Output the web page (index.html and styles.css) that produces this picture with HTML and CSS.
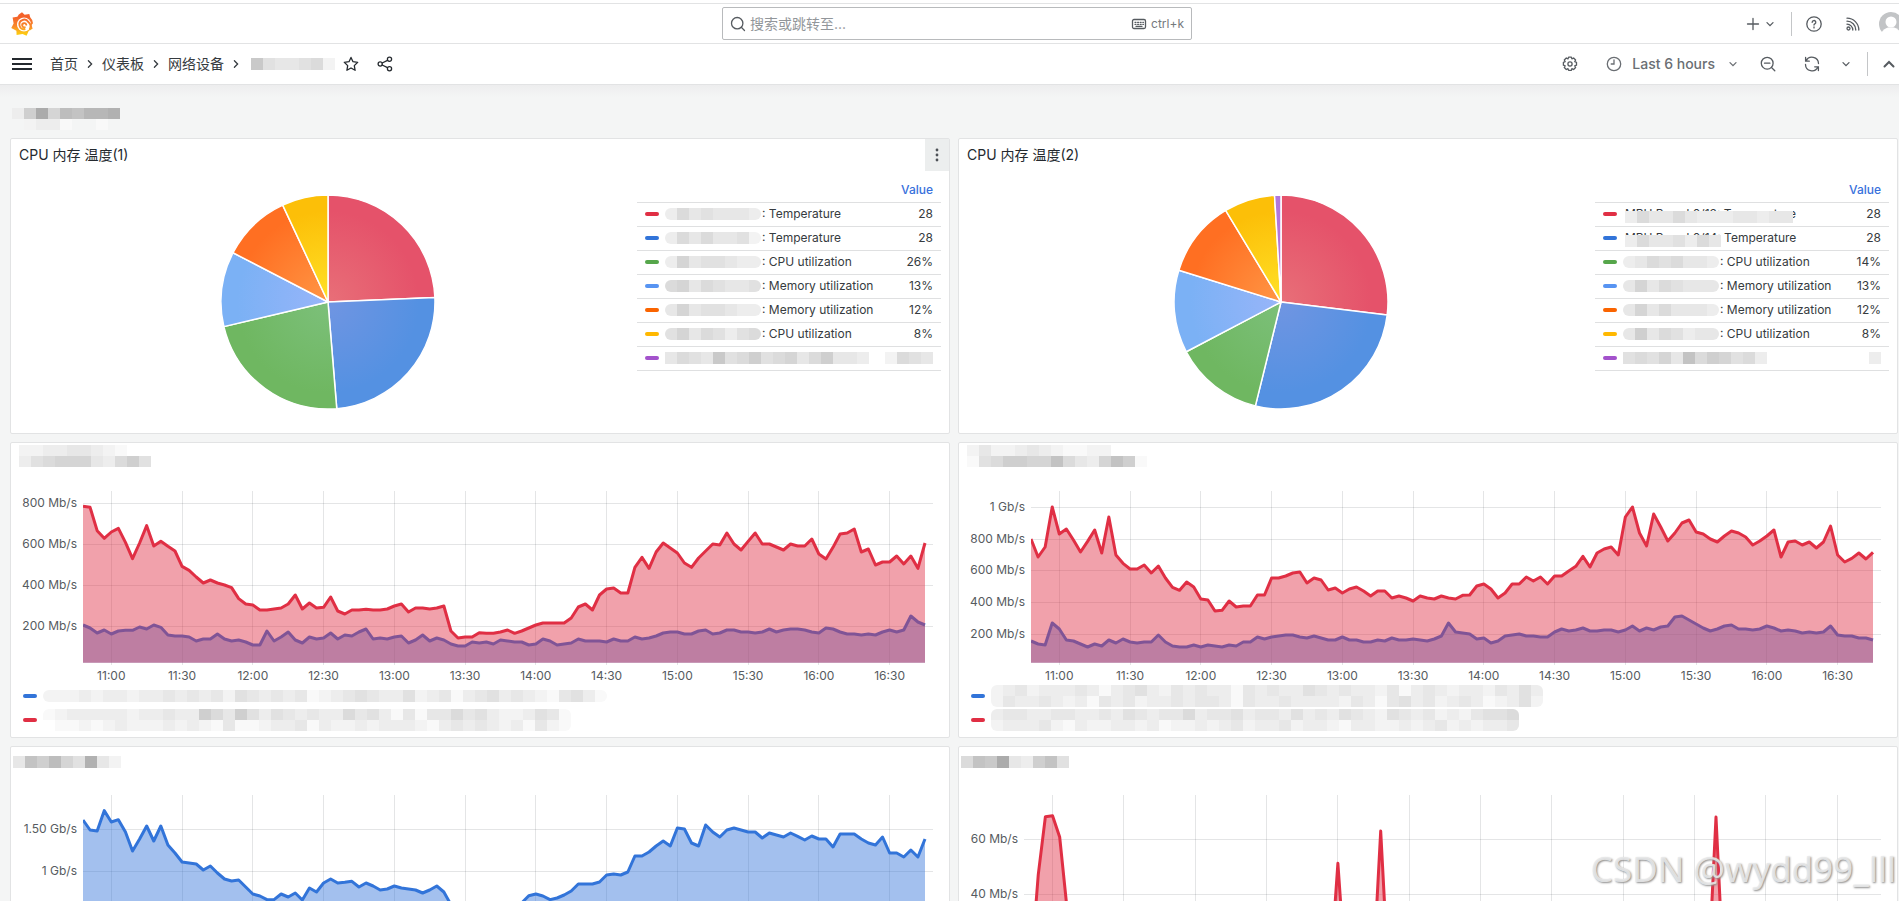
FILE: index.html
```html
<!DOCTYPE html>
<html lang="zh-CN">
<head>
<meta charset="utf-8">
<title>仪表板 - Grafana</title>
<link rel="stylesheet" href="styles.css">
</head>
<body>
<svg class="defs" aria-hidden="true">
  <defs>
    <symbol id="i-down" viewBox="0 0 16 16"><path d="M5 6.600l3 3 3-3"/></symbol>
    <symbol id="i-right" viewBox="0 0 16 16"><path d="M6.400 4.800L9.600 8l-3.200 3.200"/></symbol>
  </defs>
</svg>
<div class="shell">
  <header class="topbar">
    <a class="logo" href="#" aria-label="Grafana">
      <svg width="24" height="24" viewBox="0 0 24 24">
        <defs><linearGradient id="logo" gradientUnits="userSpaceOnUse" x1="0" y1="0" x2="0" y2="24"><stop offset="0.2" stop-color="#f4622a"/><stop offset="0.6" stop-color="#f98a2b"/><stop offset="0.85" stop-color="#fcc016"/><stop offset="1" stop-color="#fcd10b"/></linearGradient></defs>
        <path fill="url(#logo)" d="M11 .3L13.600 2.700 18.300 1.900 19.200 5.200Q22 8 22 11.200L20.600 13 21.600 16.800 17.800 18.700 15.600 23.800 11.600 22 5.600 23 5.400 18.700.3 16 2.600 11.500 1.600 5.400 6.400 4.800 7.800 2.400Z"/>
        <circle cx="13" cy="12.500" r="7" fill="#fff"/>
        <path fill="none" stroke="url(#logo)" stroke-width="1.900" stroke-linecap="round" d="M18.800 17.200A5.800 5.800 0 0 0 17.300 10 4.800 4.800 0 1 0 13.600 17.300M15.300 12.700a2.100 2.100 0 1 0-1.500 2.600"/>
      </svg>
    </a>
    <label class="search">
      <svg class="icon" width="16" height="16" viewBox="0 0 16 16"><circle cx="7.200" cy="7.200" r="5.700"/><path d="M11.300 11.300l3.200 3.200"/></svg>
      <input type="text" placeholder="搜索或跳转至..." aria-label="搜索或跳转至">
      <svg class="icon" width="16" height="16" viewBox="0 0 16 16"><rect x="1.500" y="3.500" width="13" height="9" rx="1.500"/><path stroke-dasharray="1 1.600" d="M4 6.300h8.500M4 8.300h8.500"/><path d="M5 10.300h6"/></svg>
      <span class="hint">ctrl+k</span>
    </label>
    <div class="top-actions">
      <button class="add" aria-label="New">
        <svg class="icon" width="16" height="16" viewBox="0 0 16 16"><path d="M8 2.500v11M2.500 8h11"/></svg>
        <svg class="icon" width="16" height="16"><use href="#i-down"/></svg>
      </button>
      <span class="divider"></span>
      <button aria-label="Help"><svg class="icon" width="18" height="18" viewBox="0 0 18 18"><circle cx="9" cy="9" r="7.200"/><path d="M7.200 7.400a1.800 1.800 0 1 1 2.600 1.500c-.5.300-.8.600-.8 1.200M9 11.900v1"/></svg></button>
      <button aria-label="News"><svg class="icon" width="16" height="16" viewBox="0 0 16 16"><circle cx="3.500" cy="12.500" r="1.500"/><path d="M2 8.200a5.800 5.800 0 0 1 5.800 5.800M2 5.200a8.800 8.800 0 0 1 8.800 8.800M2 2.200A11.800 11.800 0 0 1 13.800 14"/></svg></button>
      <button class="avatar" aria-label="Profile"><svg width="24" height="24" viewBox="0 0 24 24"><circle cx="12" cy="12" r="12" fill="#c2c4c6"/><circle cx="12" cy="10" r="5.500" fill="#fff"/><path fill="#fff" d="M2.500 20.500Q5 16.500 9 15.500h6q4 1 6.500 5A12 12 0 0 1 2.500 20.500z"/></svg></button>
    </div>
  </header>

  <nav class="toolbar">
    <button class="menu" aria-label="Menu"><svg width="20" height="14" viewBox="0 0 20 14"><path stroke="#24292e" stroke-width="2" d="M0 2h20M0 7h20M0 12h20"/></svg></button>
    <ol class="crumbs">
      <li><a href="#">首页</a></li>
      <li><svg class="icon" width="16" height="16"><use href="#i-right"/></svg></li>
      <li><a href="#">仪表板</a></li>
      <li><svg class="icon" width="16" height="16"><use href="#i-right"/></svg></li>
      <li><a href="#">网络设备</a></li>
      <li><svg class="icon" width="16" height="16"><use href="#i-right"/></svg></li>
      <li class="current"><span class="mosaic" data-rows="jfeefgc"></span></li>
    </ol>
    <button class="dark" aria-label="Star"><svg class="icon" width="16" height="16" viewBox="0 0 16 16"><path stroke-linejoin="round" d="M8 1.400l2 4.300 4.700.6-3.400 3.300.8 4.700L8 12l-4.100 2.300.8-4.700L1.300 6.300 6 5.700z"/></svg></button>
    <button class="dark share" aria-label="Share"><svg class="icon" width="16" height="16" viewBox="0 0 16 16"><circle cx="3.200" cy="8" r="2.100"/><circle cx="12.500" cy="3.300" r="2.100"/><circle cx="12.500" cy="12.700" r="2.100"/><path d="M5.200 7l5.300-2.700M5.200 9l5.300 2.700"/></svg></button>
    <div class="tools">
      <button aria-label="Settings"><svg class="icon" width="16" height="16" viewBox="0 0 16 16"><circle cx="8" cy="8" r="2.100"/><path stroke-linejoin="round" d="M6.600 1.200h2.800l.5 1.700 1.700-.9 2 2-.9 1.700 1.800.6v2.900l-1.800.6.9 1.700-2 2-1.700-.9-.5 1.800H6.600l-.6-1.800-1.700.9-2-2 .9-1.700-1.800-.6V6.300l1.800-.6-.9-1.700 2-2 1.700.9z"/></svg></button>
      <button class="range"><svg class="icon" width="16" height="16" viewBox="0 0 16 16"><circle cx="8" cy="8" r="6.700"/><path d="M8 4v4H5.200"/></svg><span>Last 6 hours</span><svg class="icon" width="16" height="16"><use href="#i-down"/></svg></button>
      <button class="zoom" aria-label="Zoom out"><svg class="icon" width="16" height="16" viewBox="0 0 16 16"><circle cx="7.200" cy="7.200" r="5.900"/><path d="M11.500 11.500l3.300 3.300M4.500 7.200h5.400"/></svg></button>
      <button class="refresh" aria-label="Refresh"><svg class="icon" width="16" height="16" viewBox="0 0 16 16"><path d="M1.600 1.500v3.700h3.700M2.100 5A6.500 6.500 0 0 1 14.500 7.600M14.400 14.500v-3.700h-3.700M13.900 11A6.500 6.500 0 0 1 1.500 8.400"/></svg></button>
      <button class="interval" aria-label="Refresh interval"><svg class="icon" width="16" height="16"><use href="#i-down"/></svg></button>
      <span class="divider"></span>
      <button class="collapse" aria-label="Collapse"><svg class="icon bold" width="16" height="16" viewBox="0 0 16 16"><path d="M3.500 10.500L8 6l4.500 4.500"/></svg></button>
    </div>
  </nav>

  <main class="dashboard">
    <h1 class="row-title"><span class="mosaic" data-rows="diohlkmmn/acddbaab"></span></h1>
    <div class="grid">
      <section class="panel">
        <header class="panel-head"><h2>CPU 内存 温度(1)</h2><button class="panel-menu" aria-label="Panel menu"><svg width="4" height="14" viewBox="0 0 4 14"><circle cx="2" cy="2" r="1.400"/><circle cx="2" cy="7" r="1.400"/><circle cx="2" cy="12" r="1.400"/></svg></button></header>
        <div class="pie-body">
          <svg class="pie" viewBox="-107 -107 214 214" data-values="28,28,26,13,12,8"></svg>
          <table class="legend-table first">
            <thead><tr><th></th><th>Value</th></tr></thead>
            <tbody>
              <tr><td><i class="key red"></i><span class="mosaic round" data-rows="dgefeeed"></span><span>: Temperature</span></td><td>28</td></tr>
              <tr><td><i class="key blue"></i><span class="mosaic round" data-rows="dgegeefc"></span><span>: Temperature</span></td><td>28</td></tr>
              <tr><td><i class="key green"></i><span class="mosaic round" data-rows="dheffedd"></span><span>: CPU utilization</span></td><td>26%</td></tr>
              <tr><td><i class="key sky"></i><span class="mosaic round" data-rows="ghegfeef"></span><span>: Memory utilization</span></td><td>13%</td></tr>
              <tr><td><i class="key orange"></i><span class="mosaic round" data-rows="eheffedd"></span><span>: Memory utilization</span></td><td>12%</td></tr>
              <tr><td><i class="key yellow"></i><span class="mosaic round" data-rows="fhegfdfg"></span><span>: CPU utilization</span></td><td>8%</td></tr>
              <tr><td><i class="key purple"></i><span class="mosaic" data-rows="egfejfgifghegieed"></span></td><td><span class="mosaic" data-rows="cgfe"></span></td></tr>
            </tbody>
          </table>
        </div>
      </section>

      <section class="panel">
        <header class="panel-head"><h2>CPU 内存 温度(2)</h2></header>
        <div class="pie-body">
          <svg class="pie" viewBox="-107 -107 214 214" data-values="28,28,14,13,12,8,1"></svg>
          <table class="legend-table second">
            <thead><tr><th></th><th>Value</th></tr></thead>
            <tbody>
              <tr><td><i class="key red"></i><span class="covered">MPU Board 0/13: Temperature<span class="mosaic" data-rows="dgeegedddeedee"></span></span></td><td>28</td></tr>
              <tr><td><i class="key blue"></i><span class="covered">MPU Board 0/14: Temperature<span class="mosaic" data-rows="dgeefdge"></span></span></td><td>28</td></tr>
              <tr><td><i class="key green"></i><span class="mosaic round" data-rows="degfgeed"></span><span>: CPU utilization</span></td><td>14%</td></tr>
              <tr><td><i class="key sky"></i><span class="mosaic round" data-rows="ehegfeee"></span><span>: Memory utilization</span></td><td>13%</td></tr>
              <tr><td><i class="key orange"></i><span class="mosaic round" data-rows="ehegeeed"></span><span>: Memory utilization</span></td><td>12%</td></tr>
              <tr><td><i class="key yellow"></i><span class="mosaic round" data-rows="eiegfdee"></span><span>: CPU utilization</span></td><td>8%</td></tr>
              <tr><td><i class="key purple"></i><span class="mosaic" data-rows="fgfhekgihfgd"></span></td><td><span class="mosaic" data-rows="d"></span></td></tr>
            </tbody>
          </table>
        </div>
      </section>

      <section class="panel">
        <header class="panel-head masked"><h2><span class="mosaic" data-rows="ccddeedcba/dfghhhedgif"></span></h2></header>
        <div class="chart" data-chart="a"></div>
        <ul class="legend">
          <li><i class="key blue"></i><span class="mosaic round" data-rows="cccdcddcddededecfededebcdefeddfcdebdefdedcbefdb"></span></li>
          <li><i class="key red"></i><span class="mosaic round" data-rows="bcdddddcddeddigeifdfededdgefdbebeegefdccdfeb/abbcbcdcccdcdcbebbcddebdccdcdddcbdededcdbecb"></span></li>
        </ul>
      </section>

      <section class="panel">
        <header class="panel-head masked"><h2><span class="mosaic" data-rows="ceccdedcbbcc/bfgiihhkgedhkib"></span></h2></header>
        <div class="chart" data-chart="b"></div>
        <ul class="legend">
          <li><i class="key blue"></i><span class="mosaic round" data-rows="cdecdddedbdefdcededdbededdfededdcebdedcddcedfd/ceddedcdbedecddedeedbeddeddddcedbefdecdedbcdfc"></span></li>
          <li><i class="key red"></i><span class="mosaic round" data-rows="deeddeeddedfedeegdeefdeedfdedfedcfedecdceffg/cdddecbdccddcdbccdcdecddecddcbddccdcdecdcdde"></span></li>
        </ul>
      </section>

      <section class="panel">
        <header class="panel-head masked narrow"><h2><span class="mosaic" data-rows="ekilhfnec"></span></h2></header>
        <div class="chart" data-chart="c"></div>
      </section>

      <section class="panel">
        <header class="panel-head masked narrow"><h2><span class="mosaic" data-rows="gkjoedikf"></span></h2></header>
        <div class="chart short-axis" data-chart="d"></div>
      </section>
    </div>
  </main>
  <div class="watermark">CSDN @wydd99_lll</div>
</div>
<script src="charts.js"></script>
</body>
</html>
```

FILE: styles.css
```css
* { box-sizing: border-box; }

body {
  margin: 0;
  height: 100vh;
  overflow: hidden;
  background: #f4f5f5;
  color: #24292e;
  font: 14px/20px Inter, "Noto Sans CJK SC", sans-serif;
}

button { border: 0; padding: 0; background: none; font: inherit; color: inherit; display: flex; align-items: center; }
a { color: inherit; text-decoration: none; }
h1, h2, ul, ol { margin: 0; padding: 0; font: inherit; list-style: none; }
svg { display: block; flex: none; }

.defs { position: absolute; width: 0; height: 0; }
.shell { position: relative; height: 100%; overflow: hidden; padding-top: 3px; background: #fff; }

.icon { fill: none; stroke: currentColor; stroke-width: 1.3px; stroke-linecap: round; }
.icon.bold { stroke-width: 2px; }
.divider { width: 1px; height: 24px; background: #c4c6c8; }

.topbar, .toolbar { width: calc(100% + 17px); display: flex; align-items: center; color: #565b60; }
.topbar { height: 41px; border: solid #e2e3e4; border-width: 1px 0; padding: 0 13px 0 11px; justify-content: space-between; }
.logo { width: 470px; }
.search {
  flex: 0 1 470px; height: 33px; display: flex; align-items: center; gap: 4px;
  padding: 0 7px; border: 1px solid #b8babc; border-radius: 2px;
}
.search input { flex: 1; min-width: 0; border: 0; outline: 0; padding: 0; background: none; font: inherit; color: #24292e; }
.search input::placeholder { color: #92969a; opacity: 1; }
.hint { font-size: 12px; color: #75797d; }
.top-actions { width: 470px; display: flex; align-items: center; justify-content: flex-end; }
.top-actions .add { margin-right: 13px; gap: 1px; }
.top-actions .divider { margin-right: 13px; }
.top-actions button + button { margin-left: 22px; }
.top-actions .avatar.avatar { margin-left: 18px; }

.toolbar { height: 41px; border-bottom: 1px solid #e2e3e4; padding: 0 19px 0 12px; }
.menu { margin-right: 18px; }
.crumbs { display: flex; align-items: center; gap: 4px; color: #363b40; }
.current { padding: 0 7px 0 3px; }
.dark { color: #24292e; margin-left: 1px; }
.share { margin-left: 18px; }
.tools { margin-left: auto; display: flex; align-items: center; color: #565b60; }
.range { margin-left: 28px; color: #6a6e73; font-weight: 500; }
.range span { margin: 0 10px; }
.zoom { margin-left: 19px; }
.refresh { margin-left: 28px; }
.interval { margin: 0 13px 0 18px; }
.collapse { margin-left: 13px; }

.dashboard { height: 100%; padding: 0 1px 0 10px; background: linear-gradient(#ededee, #f4f5f5 12px); }
.row-title { height: 53px; padding: 23px 0 0 2px; }
.grid { display: grid; grid-template-columns: 1fr 1fr; grid-auto-rows: 296px; gap: 8px; }
.panel { min-width: 0; display: flex; flex-direction: column; background: #fff; border: 1px solid #e2e3e4; border-radius: 2px; }
.panel-head { height: 32px; display: flex; align-items: center; justify-content: space-between; padding-left: 8px; }
.panel-head.masked { align-items: flex-start; padding: 2px 0 0 8px; }
.panel-head.narrow { padding: 9px 0 0 2px; }
.panel-menu { width: 24px; height: 32px; justify-content: center; background: #eceeee; fill: #4d5156; }

.pie-body { flex: 1; display: flex; align-items: flex-start; padding: 8px; }
.pie { flex: 1; min-width: 0; height: 214px; margin-top: 16px; }
.pie path { stroke: #fff; stroke-width: 1.5px; stroke-linejoin: round; }
.legend-table { border-collapse: collapse; font-size: 12px; line-height: 16px; }
.legend-table.first { width: 304px; }
.legend-table.second { width: 294px; }
.legend-table tr { border-bottom: 1px solid #dfe0e1; }
.legend-table th, .legend-table td { padding: 0 8px; height: 23px; vertical-align: middle; }
.legend-table th { color: #3871dc; font-weight: 500; text-align: right; }
.legend-table td { color: #363b40; }
.legend-table td:last-child { text-align: right; padding-left: 0; }
.legend-table td:last-child .mosaic { width: fit-content; margin-left: auto; }
.legend-table td:first-child { display: flex; align-items: center; white-space: nowrap; }
.covered { position: relative; margin-left: 8px; }
.covered .mosaic { position: absolute; left: 0; top: 5px; }
.legend-table .round { margin: 0 1px 0 4px; }
.key + .mosaic { margin-left: 6px; }

.key { flex: none; width: 14px; height: 4px; border-radius: 2px; }
.red { background: #e02f44; }
.blue { background: #3274d9; }
.green { background: #56a64b; }
.sky { background: #5794f2; }
.orange { background: #fa6400; }
.yellow { background: #ffb800; }
.purple { background: #a352cc; }

.mosaic { display: block; flex: none; }
.mosaic.round { border-radius: 6px; overflow: hidden; }

.chart { display: grid; grid-template-columns: 58px 1fr; column-gap: 6px; padding: 16px 16px 0 8px; font-size: 12px; line-height: 18px; color: #565b60; }
.short-axis { grid-template-columns: 51px 1fr; }
.y-axis, .x-axis { position: relative; }
.y-axis span, .x-axis span { position: absolute; white-space: nowrap; }
.y-axis span { right: 0; transform: translateY(-50%); }
.x-axis { grid-column: 2; height: 19px; }
.x-axis span { top: 2px; transform: translateX(-50%); }
.plot { width: 100%; height: 174px; }
.plot .gridline { stroke: #24292e; stroke-opacity: 0.12; stroke-width: 1px; vector-effect: non-scaling-stroke; shape-rendering: crispEdges; }
.plot .area { fill-opacity: 0.45; }
.plot .line { fill: none; stroke-width: 3px; stroke-linejoin: round; vector-effect: non-scaling-stroke; }

.legend { padding-left: 12px; }
.legend li { height: 24px; display: flex; align-items: center; }

.watermark {
  position: absolute; right: 3px; bottom: 8px;
  font: 35px/48px "Noto Sans", sans-serif;
  color: rgba(232, 233, 234, 0.9);
  text-shadow: 1px 1px 2px #8d8d8d;
}
```

FILE: charts.js
```js
const RED = '#e02f44';
const BLUE = '#3274d9';
const NS = 'http://www.w3.org/2000/svg';

// One sample every three minutes; y runs downwards in plot units.
const charts = {
  a: {
    top: 169, times: true,
    ticks: [['800 Mb/s', 205], ['600 Mb/s', 328], ['400 Mb/s', 451], ['200 Mb/s', 574]],
    series: [
      [BLUE, [571,580,595,586,598,589,587,587,577,583,571,578,601,604,604,607,619,613,613,598,613,619,616,622,631,631,589,619,607,592,616,625,607,613,610,595,613,601,604,592,583,613,610,613,607,604,625,616,601,619,610,616,628,634,634,622,625,622,628,616,619,622,622,631,628,613,619,631,628,625,613,619,619,619,622,613,619,619,607,613,610,604,595,592,592,598,598,589,586,598,595,586,586,592,592,595,592,583,592,586,583,583,586,592,595,580,583,592,598,598,601,598,601,592,586,592,586,544,562,571]],
      [RED, [215,218,288,311,292,281,323,372,325,273,334,320,335,349,395,407,427,445,436,445,451,459,492,508,511,526,526,523,520,508,481,523,505,520,518,487,529,538,526,526,524,526,526,523,514,508,532,520,520,523,520,514,589,610,607,607,594,596,596,592,586,596,589,580,571,565,565,565,565,550,517,508,526,481,463,460,475,475,398,368,401,352,325,340,355,385,398,370,349,328,331,295,328,346,320,295,328,328,337,346,328,334,334,313,358,373,338,298,295,283,352,343,391,382,382,364,388,364,401,325]]
    ]
  },
  b: {
    top: 169, times: true,
    ticks: [['1 Gb/s', 217], ['800 Mb/s', 313], ['600 Mb/s', 406], ['400 Mb/s', 502], ['200 Mb/s', 598]],
    series: [
      [BLUE, [619,628,631,565,583,616,619,628,637,628,634,616,625,613,622,625,622,622,601,622,634,637,637,631,637,631,634,637,631,634,622,622,607,613,607,604,601,601,607,610,604,610,616,616,607,616,616,622,622,616,619,610,616,616,613,616,619,613,604,565,592,595,598,613,610,625,619,604,601,598,604,604,607,607,592,583,589,586,580,589,589,586,586,592,586,574,589,580,586,577,574,547,544,556,568,580,589,583,574,571,583,583,586,583,574,580,589,586,589,595,592,595,592,574,601,604,604,610,610,616]],
      [RED, [313,367,337,217,298,283,316,352,320,286,355,247,361,386,403,403,391,415,394,430,458,467,442,457,493,496,529,527,499,517,514,514,481,481,430,430,424,415,412,445,430,436,466,460,475,463,457,469,484,469,469,490,484,490,499,484,490,493,484,490,493,482,481,454,448,463,490,475,448,448,427,439,427,448,424,424,409,395,365,397,355,343,337,361,247,217,295,334,238,277,319,295,265,256,292,298,313,322,304,289,295,307,331,319,304,286,367,322,319,331,322,340,322,274,361,382,371,355,373,353]]
    ]
  },
  c: {
    top: 166,
    ticks: [['1.50 Gb/s', 268], ['1 Gb/s', 394]],
    series: [
      [BLUE, [241,271,274,213,247,240,277,334,298,259,304,259,316,340,367,370,373,391,379,400,418,424,421,442,463,469,480,480,463,472,460,481,445,457,430,418,430,428,425,442,430,439,451,448,439,445,448,451,460,451,439,457,495,530,530,530,530,530,530,530,520,505,490,468,463,469,480,475,466,454,433,433,433,427,406,403,406,397,349,349,337,319,304,319,265,268,310,319,256,277,292,271,265,271,277,277,295,280,286,292,280,290,301,289,298,298,322,283,283,283,298,310,316,292,340,340,352,331,352,298]]
    ]
  },
  d: {
    top: 166,
    ticks: [['60 Mb/s', 298], ['40 Mb/s', 463]],
    series: [[RED, spikes({ 2: 405, 3: 231, 4: 228, 5: 292, 6: 500, 44: 371, 50: 274, 97: 232 })]]
  }
};

function spikes(peaks) {
  return Array.from({ length: 120 }, (_, i) => peaks[i] || 678);
}

function add(parent, name, attrs) {
  const node = document.createElementNS(NS, name);
  for (const key in attrs) node.setAttribute(key, attrs[key]);
  parent.appendChild(node);
  return node;
}

function label(parent, text, side, percent) {
  const span = document.createElement('span');
  span.textContent = text;
  span.style[side] = percent + '%';
  parent.appendChild(span);
}

document.querySelectorAll('.chart').forEach(box => {
  const { top, times, ticks, series } = charts[box.dataset.chart];
  const width = 120.13, height = 522, base = top + 515;
  const yAxis = document.createElement('div');
  yAxis.className = 'y-axis';
  const xAxis = document.createElement('div');
  xAxis.className = 'x-axis';
  box.append(yAxis);
  const svg = add(box, 'svg', { class: 'plot', viewBox: `0 ${top} ${width} ${height}`, preserveAspectRatio: 'none' });
  box.append(xAxis);

  ticks.forEach(([text, y]) => {
    add(svg, 'line', { class: 'gridline', x1: 0, x2: width, y1: y, y2: y });
    label(yAxis, text, 'top', (y - top) / height * 100);
  });
  for (let k = 0; k < 12; k++) {
    const x = 4 + k * 10;
    add(svg, 'line', { class: 'gridline', x1: x, x2: x, y1: top, y2: top + height });
    if (times) label(xAxis, `${11 + (k >> 1)}:${k % 2 ? '30' : '00'}`, 'left', x / width * 100);
  }
  series.forEach(([color, ys]) => {
    const points = ys.map((y, i) => `${i},${y}`).join(' ');
    add(svg, 'polygon', { class: 'area', fill: color, points: `0,${base} ${points} 119,${base}` });
    add(svg, 'polyline', { class: 'line', stroke: color, points });
  });
});

const slices = [
  ['#e86f78', '#e5526a'], ['#7095e2', '#5491e2'], ['#7cc07a', '#6fb761'], ['#98b5f9', '#7bb1f5'],
  ['#ff9645', '#ff6f22'], ['#ffe127', '#fcbf08'], ['#b877d9', '#b077dd']
];

document.querySelectorAll('.pie').forEach((svg, n) => {
  const values = svg.dataset.values.split(',').map(Number);
  const total = values.reduce((a, b) => a + b);
  const r = 107;
  let from = 0;
  values.forEach((value, i) => {
    const id = `slice-${n}-${i}`;
    const gradient = add(svg, 'radialGradient', { id, gradientUnits: 'userSpaceOnUse', cx: 0, cy: 0, r });
    add(gradient, 'stop', { offset: 0, 'stop-color': slices[i][0] });
    add(gradient, 'stop', { offset: 0.85, 'stop-color': slices[i][1] });
    const to = from + value / total * 2 * Math.PI;
    const at = t => `${r * Math.sin(t)} ${-r * Math.cos(t)}`;
    add(svg, 'path', { fill: `url(#${id})`, d: `M0 0L${at(from)}A${r} ${r} 0 0 1 ${at(to)}Z` });
    from = to;
  });
});

// Each letter is one 12px tile: "a" is clear, later letters are darker.
document.querySelectorAll('.mosaic').forEach(box => {
  const rows = box.dataset.rows.split('/');
  const columns = Math.max(...rows.map(row => row.length));
  const tile = rows.length > 1 ? 11 : 12;
  const svg = add(box, 'svg', { width: columns * 12, height: rows.length * tile, 'shape-rendering': 'crispEdges' });
  rows.forEach((row, y) => [...row].forEach((letter, x) => {
    const step = letter.charCodeAt(0) - 97;
    const tone = 255 - step * 6;
    if (step) add(svg, 'rect', { x: x * 12, y: y * tile, width: 12, height: tile, fill: `rgb(${tone},${tone},${tone})` });
  }));
});
```
